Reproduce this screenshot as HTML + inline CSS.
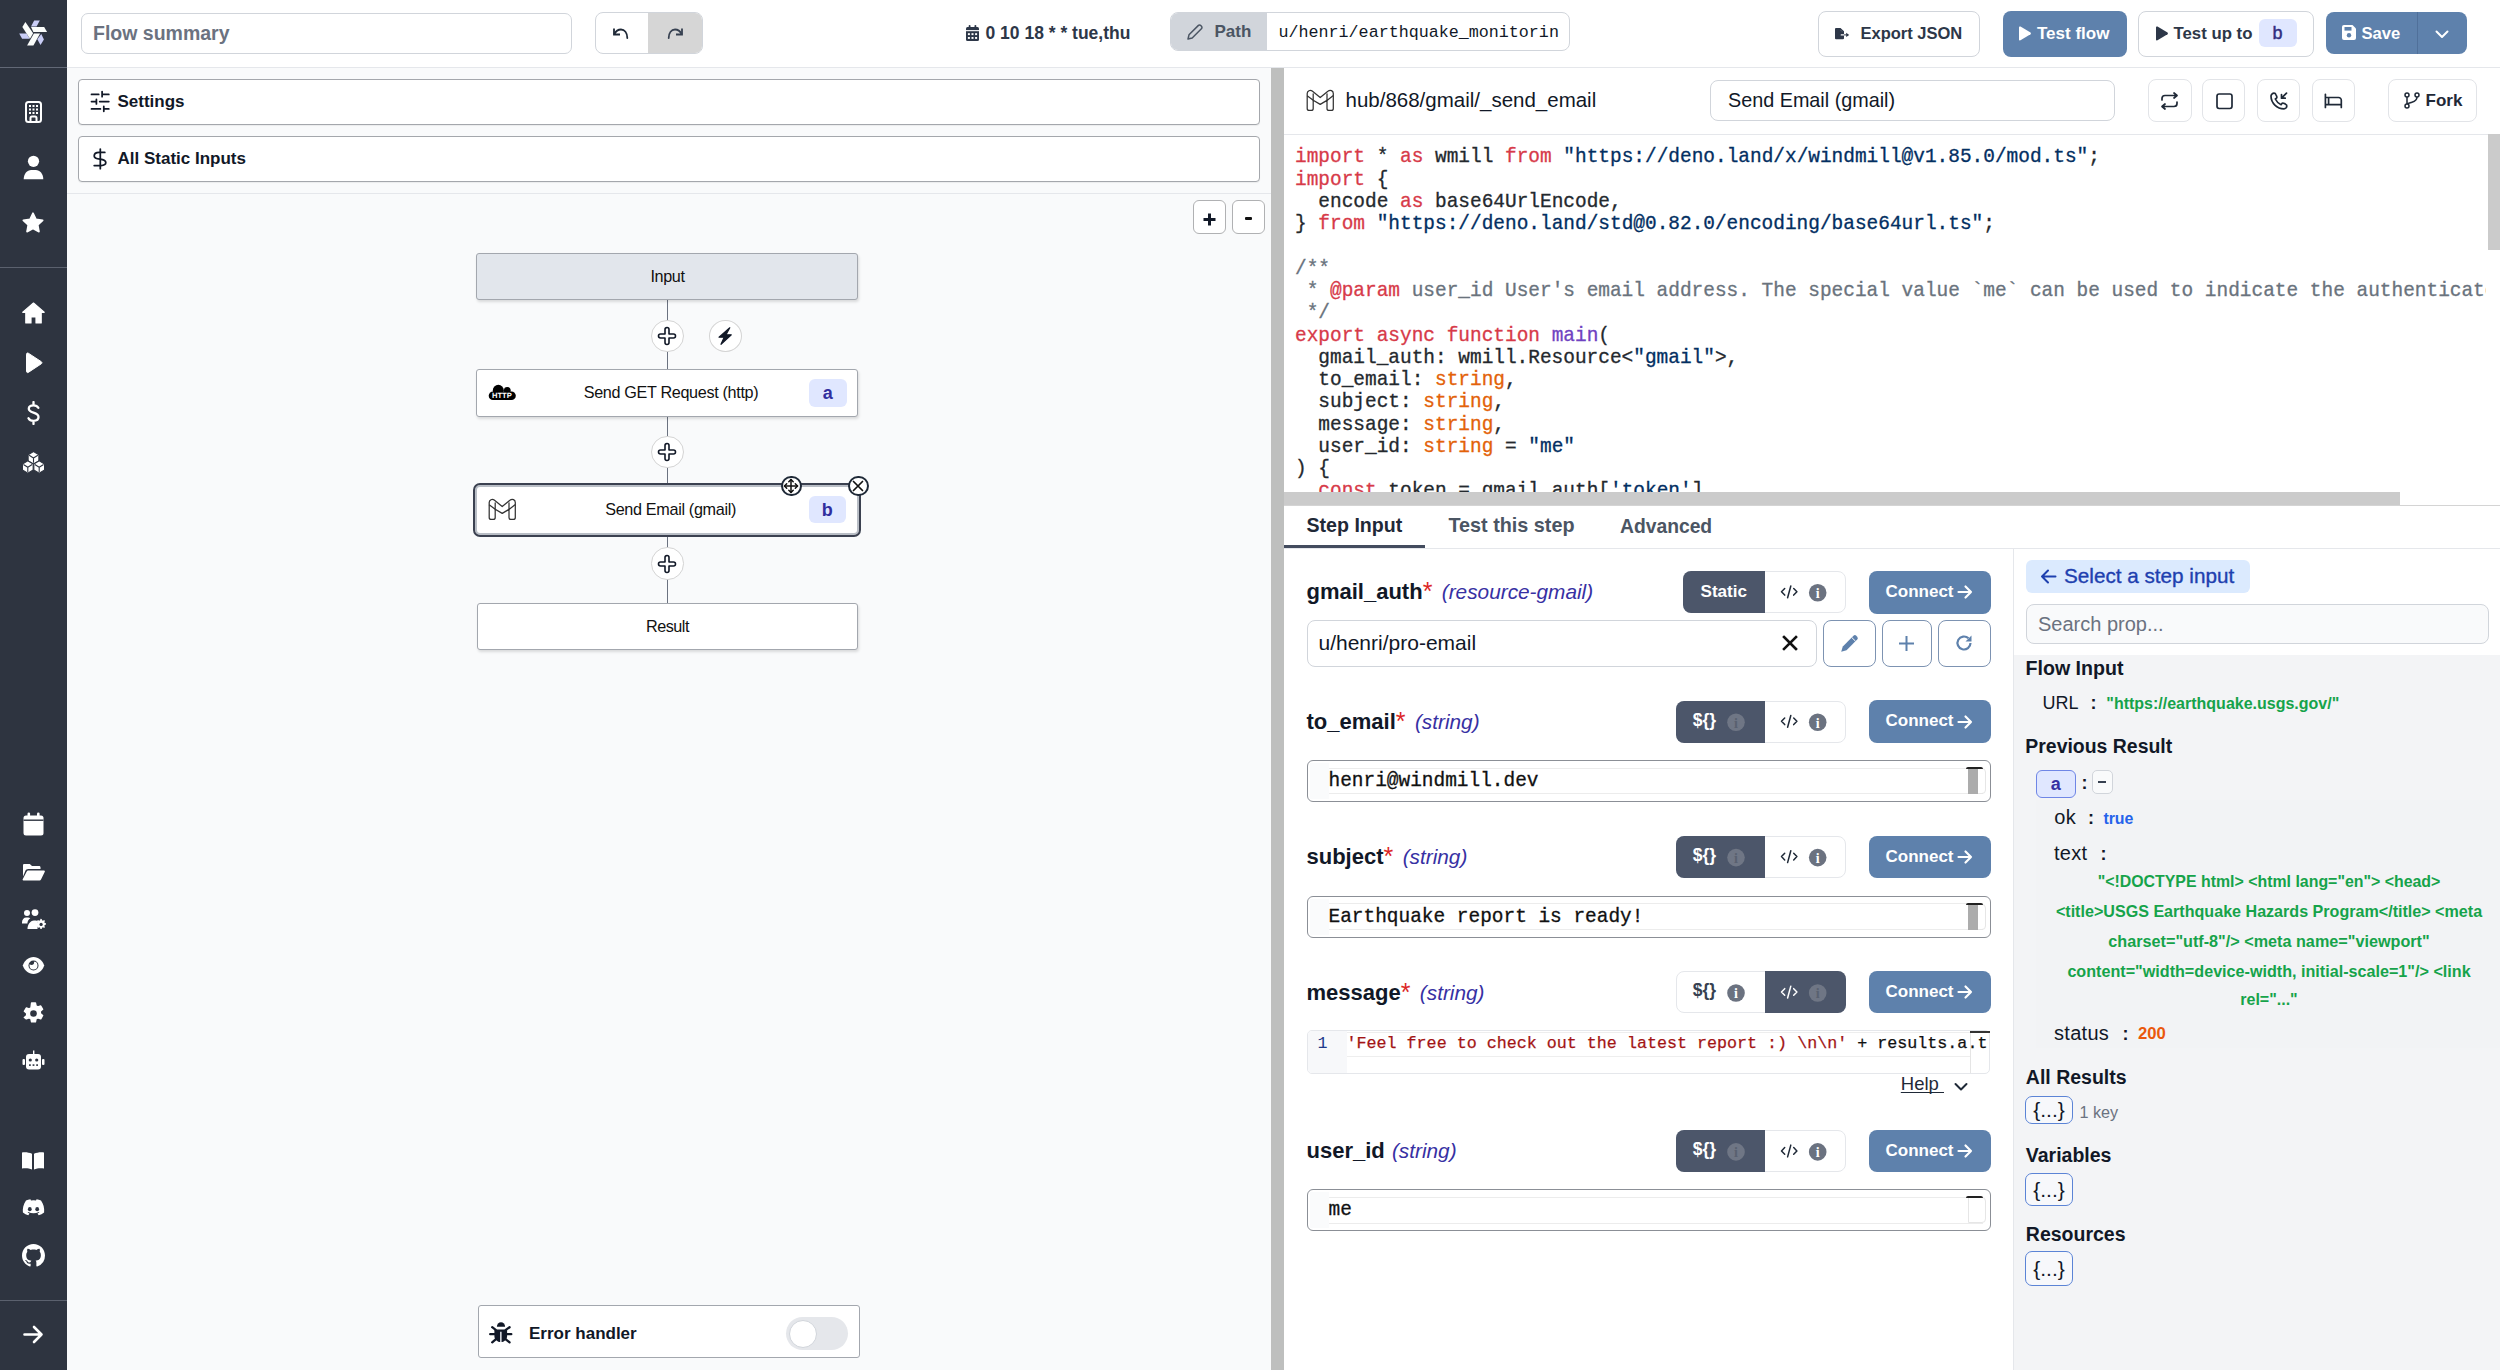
<!DOCTYPE html>
<html><head><meta charset="utf-8">
<style>
*{box-sizing:border-box;margin:0;padding:0}
html,body{width:2500px;height:1370px;overflow:hidden;background:#fff;font-family:"Liberation Sans",sans-serif;color:#111827;position:relative}
.a{position:absolute}
.ic{position:absolute;display:block}
#sb{left:0;top:0;width:67px;height:1370px;background:#2e3440}
.hr{position:absolute;left:0;width:67px;height:2px;background:#4a5060}
</style></head>
<body>

<div class="a" style="left:67px;top:0;width:2433px;height:67px;background:#fff"></div>
<div class="a" style="left:67px;top:67px;width:2433px;height:1px;background:#e5e7eb"></div>
<div class="a" style="left:67px;top:68px;width:1204px;height:1302px;background:#f9fafb"></div>
<div class="a" style="left:1271px;top:68px;width:13px;height:1302px;background:#bebfbe"></div>
<div class="a" style="left:1284px;top:68px;width:1216px;height:1302px;background:#fff"></div>
<div id="sb" class="a">
<svg class="ic" style="left:15px;top:15px" width="36" height="36" viewBox="0 0 1370 1370">
<polygon fill="#c9cdf6" points="160,700 440,700 560,905 270,905"/>
<polygon fill="#c9cdf6" points="730,210 945,210 820,435 610,435"/>
<polygon fill="#c9cdf6" points="1000,725 1100,930 970,1140 850,925"/>
<polygon fill="#fbfdfb" points="395,265 690,690 570,905 280,460"/>
<polygon fill="#fbfdfb" points="610,460 1110,460 1220,645 700,645"/>
<polygon fill="#fbfdfb" points="720,700 955,700 700,1160 460,1160"/>
</svg>
<div class="hr" style="top:66.8px;height:1.5px;background:#626876"></div>
<!-- building -->
<svg class="ic" style="left:25px;top:101px" width="17" height="22" viewBox="0 0 17 22"><rect x="1" y="1" width="15" height="20" rx="2.5" fill="none" stroke="#fff" stroke-width="2"/>
<g fill="#fff"><rect x="4" y="4" width="2" height="2"/><rect x="7.5" y="4" width="2" height="2"/><rect x="11" y="4" width="2" height="2"/><rect x="4" y="7.5" width="2" height="2"/><rect x="7.5" y="7.5" width="2" height="2"/><rect x="11" y="7.5" width="2" height="2"/><rect x="4" y="11" width="2" height="2"/><rect x="7.5" y="11" width="2" height="2"/><rect x="11" y="11" width="2" height="2"/></g>
<path d="M5.5 21v-4a1.5 1.5 0 0 1 1.5-1.5h3a1.5 1.5 0 0 1 1.5 1.5v4" fill="none" stroke="#fff" stroke-width="2"/></svg>
<!-- user -->
<svg class="ic" style="left:23px;top:155px" width="21" height="25" viewBox="0 0 21 25"><circle cx="10.5" cy="6.3" r="5.6" fill="#fff"/><path d="M0.7 24.3c0-5.5 3.5-9.3 7.5-9.3h4.6c4 0 7.5 3.8 7.5 9.3z" fill="#fff"/></svg>
<!-- star -->
<svg class="ic" style="left:22px;top:212px" width="22" height="22" viewBox="0 0 22 22"><path d="M11 1.2l3 6.2 6.7.9-4.9 4.7 1.2 6.7L11 16.5l-6 3.2 1.2-6.7L1.3 8.3 8 7.4z" fill="#fff" stroke="#fff" stroke-width="1.6" stroke-linejoin="round"/></svg>
<div class="hr" style="top:266.8px;height:1.5px;background:#5b616e"></div>
<!-- home -->
<svg class="ic" style="left:22px;top:302px" width="23" height="22" viewBox="0 0 23 22"><path d="M11.5 1L0.8 10.3h3v10.7h5.2v-6h5v6h5.2V10.3h3z" fill="#fff" stroke="#fff" stroke-width="1.2" stroke-linejoin="round"/></svg>
<!-- play -->
<svg class="ic" style="left:24px;top:352px" width="19" height="22" viewBox="0 0 19 22"><path d="M2.5 2.2c0-1 1-1.5 1.8-1l13 8.5c.8.5.8 1.6 0 2.1l-13 8.6c-.8.5-1.8 0-1.8-1z" fill="#fff" stroke="#fff" stroke-width="1" stroke-linejoin="round"/></svg>
<!-- dollar -->
<svg class="ic" style="left:26px;top:401px" width="15" height="24" viewBox="0 0 15 24"><path d="M7.500 1v3.200M7.500 19.800V23M12.300 6.800c-.8-1.500-2.500-2.500-4.800-2.500-2.900 0-4.700 1.500-4.700 3.500 0 4.900 9.700 2.900 9.700 8.300 0 2.200-2 3.700-5 3.700-2.500 0-4.200-1-5-2.600" fill="none" stroke="#fff" stroke-width="2.300" stroke-linecap="round"/></svg>
<!-- cubes -->
<svg class="ic" style="left:21px;top:451px" width="25" height="23" viewBox="0 0 25 23"><polygon points="12.5,0.5999999999999996 17.8692,3.6999999999999997 17.8692,9.9 12.5,13.0 7.1308,9.9 7.1308,3.6999999999999997" fill="#fff" stroke="#2e3440" stroke-width="1.100" stroke-linejoin="round"/><path d="M12.5 7.0V11.8M12.5 7.0L8.1308 4.3M12.5 7.0L16.8692 4.3" stroke="#2e3440" stroke-width="1.100"/><polygon points="6.8,9.8 12.1692,12.9 12.1692,19.1 6.8,22.2 1.4307999999999996,19.1 1.4307999999999996,12.9" fill="#fff" stroke="#2e3440" stroke-width="1.100" stroke-linejoin="round"/><path d="M6.8 16.2V21.0M6.8 16.2L2.4307999999999996 13.5M6.8 16.2L11.1692 13.5" stroke="#2e3440" stroke-width="1.100"/><polygon points="18.2,9.8 23.5692,12.9 23.5692,19.1 18.2,22.2 12.8308,19.1 12.8308,12.9" fill="#fff" stroke="#2e3440" stroke-width="1.100" stroke-linejoin="round"/><path d="M18.2 16.2V21.0M18.2 16.2L13.8308 13.5M18.2 16.2L22.5692 13.5" stroke="#2e3440" stroke-width="1.100"/></svg>

<!-- calendar -->
<svg class="ic" style="left:23px;top:812px" width="21" height="24" viewBox="0 0 21 24"><rect x="0.5" y="3.5" width="20" height="20" rx="2.5" fill="#fff"/><rect x="4.5" y="0.5" width="2.6" height="6" rx="1.3" fill="#fff"/><rect x="14" y="0.5" width="2.6" height="6" rx="1.3" fill="#fff"/><rect x="0.5" y="7.5" width="20" height="1.4" fill="#2e3440"/></svg>
<!-- folder open -->
<svg class="ic" style="left:22px;top:863px" width="23" height="18" viewBox="0 0 23 18"><path d="M1 2.2C1 1.5 1.6 1 2.3 1h5.5l2.2 2h7.2c.7 0 1.3.6 1.3 1.3V6H6.2c-1.3 0-2.3.7-2.8 1.8L1 13.5z" fill="#fff"/><path d="M6.5 7.5h15.5c.7 0 1.1.7.8 1.3l-3.8 7.8c-.3.5-.8.9-1.4.9H1.4c-.6 0-1-.6-.7-1.2l3.9-7.6c.3-.7 1.1-1.2 1.9-1.2z" fill="#fff"/></svg>
<!-- users cog -->
<svg class="ic" style="left:22px;top:909px" width="24" height="21" viewBox="0 0 24 21"><g fill="#fff"><circle cx="5" cy="4" r="3"/><circle cx="13" cy="3.6" r="3.4"/><path d="M0 13.5c0-3 1.8-5 4.2-5h2c.8 0 1.5.3 2.1.7-1.8 1.1-2.9 3-2.9 5.3H0z"/><path d="M5.5 20c0-4 2.6-8.5 6.5-8.5h1.5c1 0 1.8.2 2.5.6-.3 1.4-.2 3 .5 4.3L15 19l1 1z"/><path d="M18.5 9.8l1.2.1.3 1.3 1 .5 1.1-.7.9.9-.7 1.1.5 1 1.2.3v1.3l-1.2.3-.5 1 .7 1.1-.9.9-1.1-.7-1 .5-.3 1.2h-1.3l-.3-1.2-1-.5-1.1.7-.9-.9.7-1.1-.5-1-1.2-.3v-1.3l1.2-.3.5-1-.7-1.1.9-.9 1.1.7 1-.5z"/></g><circle cx="19.1" cy="15.4" r="1.6" fill="#2e3440"/></svg>
<!-- eye -->
<svg class="ic" style="left:22px;top:956px" width="23" height="19" viewBox="0 0 23 19"><path d="M11.5 1C6.3 1 2.4 4.6.8 9.5c1.6 4.9 5.5 8.5 10.7 8.5s9.1-3.6 10.7-8.5C20.6 4.6 16.7 1 11.5 1z" fill="#fff"/><circle cx="11.5" cy="9.5" r="5" fill="#2e3440"/><path d="M11.5 5.5a4 4 0 1 1-4 4c0-.4 0-.8.2-1.2.5.4 1.1.6 1.8.6a2.6 2.6 0 0 0 2.6-2.6c0-.3-.1-.6-.2-.8z" fill="#fff"/></svg>
<!-- cog -->
<svg class="ic" style="left:22px;top:1002px" width="23" height="23" viewBox="0 0 23 23"><path d="M9.6 1h3.8l.6 3 1.8 1 2.9-1 1.9 3.3-2.3 2v2.2l2.3 2-1.9 3.3-2.9-1-1.8 1-.6 3H9.6l-.6-3-1.8-1-2.9 1L2.4 15.5l2.3-2v-2.2l-2.3-2L4.3 6 7.2 7 9 6z" fill="#fff" stroke="#fff" stroke-width="1.5" stroke-linejoin="round"/><circle cx="11.5" cy="11.5" r="3.3" fill="#2e3440"/></svg>
<!-- robot -->
<svg class="ic" style="left:22px;top:1050px" width="23" height="21" viewBox="0 0 23 21"><rect x="11" y="0.5" width="1.4" height="4" fill="#fff"/><rect x="4" y="4" width="15" height="15.5" rx="3" fill="#fff"/><rect x="0.5" y="9" width="2.5" height="6" rx="1" fill="#fff"/><rect x="20" y="9" width="2.5" height="6" rx="1" fill="#fff"/><circle cx="8.3" cy="10" r="1.6" fill="#2e3440"/><circle cx="14.7" cy="10" r="1.6" fill="#2e3440"/><rect x="7" y="14.3" width="1.8" height="1.6" fill="#2e3440"/><rect x="10.6" y="14.3" width="1.8" height="1.6" fill="#2e3440"/><rect x="14.2" y="14.3" width="1.8" height="1.6" fill="#2e3440"/></svg>

<!-- book -->
<svg class="ic" style="left:21px;top:1151px" width="24" height="19" viewBox="0 0 24 19"><path d="M1 1.5c3.5-.5 7 0 10 1.3v15.7C8 17.2 4.5 17 1 17.5z" fill="#fff"/><path d="M23 1.5c-3.5-.5-7 0-10 1.3v15.7c3-1.3 6.5-1.5 10-1z" fill="#fff"/></svg>
<!-- discord -->
<svg class="ic" style="left:22px;top:1199px" width="23" height="18" viewBox="0 0 23 18"><path d="M19 1.6A18 18 0 0 0 14.6.3l-.6 1.2a16 16 0 0 0-5 0L8.4.3A18 18 0 0 0 4 1.6C1.3 5.7.5 9.6.9 13.5a18 18 0 0 0 5.4 2.8l1.2-1.9-1.9-.9.5-.4a12.800 12.800 0 0 0 10.8 0l.5.4-1.9.9 1.2 1.9a18 18 0 0 0 5.4-2.8c.5-4.5-.7-8.4-3.100-11.9z" fill="#fff"/><ellipse cx="7.8" cy="10.2" rx="1.9" ry="2.1" fill="#2e3440"/><ellipse cx="15.2" cy="10.2" rx="1.9" ry="2.1" fill="#2e3440"/></svg>
<!-- github -->
<svg class="ic" style="left:22px;top:1243px" width="23" height="25" viewBox="0 0 16 16"><path fill="#fff" d="M8 0C3.58 0 0 3.58 0 8c0 3.54 2.29 6.53 5.47 7.59.4.07.55-.17.55-.38 0-.19-.01-.82-.01-1.49-2.01.37-2.53-.49-2.69-.94-.09-.23-.48-.94-.82-1.13-.28-.15-.68-.52-.01-.53.63-.01 1.08.58 1.23.82.72 1.21 1.87.87 2.33.66.07-.52.28-.87.51-1.07-1.780-.2-3.640-.89-3.640-3.95 0-.87.31-1.59.82-2.15-.08-.2-.36-1.02.08-2.12 0 0 .67-.21 2.2.82.64-.18 1.32-.27 2-.27.68 0 1.36.09 2 .27 1.53-1.04 2.2-.82 2.2-.82.44 1.1.16 1.92.08 2.12.51.56.82 1.27.82 2.15 0 3.07-1.87 3.75-3.650 3.95.29.25.54.73.54 1.48 0 1.07-.01 1.93-.01 2.2 0 .21.15.46.55.38A8.013 8.013 0 0016 8c0-4.42-3.58-8-8-8z"/></svg>
<div class="hr" style="top:1299.5px;height:1.5px;background:#5b616e"></div>
<!-- arrow -->
<svg class="ic" style="left:23px;top:1325px" width="21" height="19" viewBox="0 0 21 19"><path d="M1.5 9.5h17M11 2l7.5 7.5L11 17" fill="none" stroke="#fff" stroke-width="2.6" stroke-linecap="round" stroke-linejoin="round"/></svg>
</div>

<div style="position:absolute;left:81px;top:13px;width:491px;height:41px;border:1px solid #d1d5db;border-radius:7px;background:#fff"></div>
<div style="position:absolute;left:93px;top:23.72px;font-family:'Liberation Sans',sans-serif;font-size:19.5px;line-height:1;font-weight:700;font-style:normal;color:#6b7280;white-space:pre;">Flow summary</div>
<div style="position:absolute;left:595px;top:12px;width:108px;height:42px;border:1px solid #d1d5db;border-radius:8px;background:#fff;overflow:hidden"></div>
<div style="position:absolute;left:648px;top:13px;width:54px;height:40px;background:#d6d6d6;border-radius:0 7px 7px 0"></div>
<svg style="position:absolute;left:612px;top:27px;overflow:visible;" width="18" height="14" viewBox="0 0 18 14"><path d="M2 1.5v6h6" fill="none" stroke="#1f2937" stroke-width="1.8" stroke-linejoin="miter"/><path d="M2.5 7C4 3.8 6.5 2.5 9 2.5c3.5 0 6.2 3 6.3 8.5" fill="none" stroke="#1f2937" stroke-width="1.8" stroke-linecap="round"/></svg>
<svg style="position:absolute;left:666px;top:27px;overflow:visible;" width="18" height="14" viewBox="0 0 18 14"><path d="M16 1.5v6h-6" fill="none" stroke="#374151" stroke-width="1.8"/><path d="M15.5 7C14 3.8 11.5 2.5 9 2.5c-3.5 0-6.2 3-6.3 8.5" fill="none" stroke="#374151" stroke-width="1.8" stroke-linecap="round"/></svg>
<svg style="position:absolute;left:966px;top:25px;overflow:visible;" width="13" height="16" viewBox="0 0 13 16"><rect x="0" y="2" width="13" height="14" rx="1.500" fill="#2d3748"/><rect x="2.700" y="0" width="1.800" height="4" rx=".8" fill="#2d3748"/><rect x="8.500" y="0" width="1.800" height="4" rx=".8" fill="#2d3748"/><rect x="0" y="5.100" width="13" height="1.100" fill="#fff"/><g fill="#fff"><rect x="1.900" y="8.200" width="2" height="1.900"/><rect x="5.500" y="8.200" width="2" height="1.900"/><rect x="9.100" y="8.200" width="2" height="1.900"/><rect x="1.900" y="12" width="2" height="1.900"/><rect x="5.500" y="12" width="2" height="1.900"/><rect x="9.100" y="12" width="2" height="1.900"/></g></svg>
<div style="position:absolute;left:985.5px;top:25.12px;font-family:'Liberation Sans',sans-serif;font-size:17.5px;line-height:1;font-weight:700;font-style:normal;color:#2d3748;white-space:pre;">0 10 18 * * tue,thu</div>
<div style="position:absolute;left:1170px;top:12px;width:400px;height:39px;border:1px solid #d1d5db;border-radius:8px;background:#fff;overflow:hidden"></div>
<div style="position:absolute;left:1171px;top:13px;width:96px;height:37px;background:#d1d5db;border-radius:7px 0 0 7px"></div>
<svg style="position:absolute;left:1186px;top:24px;overflow:visible;" width="17" height="17" viewBox="0 0 17 17"><path d="M2 15l1-4.2L12.2 1.6a1.8 1.8 0 0 1 2.6 0l.6.6a1.8 1.8 0 0 1 0 2.6L6.200 14z" fill="none" stroke="#4b5563" stroke-width="1.5" stroke-linejoin="round"/></svg>
<div style="position:absolute;left:1214.5px;top:22.85px;font-family:'Liberation Sans',sans-serif;font-size:17px;line-height:1;font-weight:700;font-style:normal;color:#4b5563;white-space:pre;">Path</div>
<div style="position:absolute;left:1278.5px;top:24.91px;font-family:'Liberation Mono',monospace;font-size:16.7px;line-height:1;font-weight:400;font-style:normal;color:#111827;white-space:pre;">u/henri/earthquake_monitorin</div>
<div style="position:absolute;left:1818px;top:11px;width:162px;height:46px;border:1px solid #d1d5db;border-radius:8px;background:#fff"></div>
<svg style="position:absolute;left:1835px;top:27.8px;overflow:visible;" width="15" height="12" viewBox="0 0 15 12"><path d="M0 1a1 1 0 0 1 1-1H5.500L9 3.300V6.200H6.300a.7.7 0 0 0 0 1.400H9V10.200a1 1 0 0 1-1 1H1a1 1 0 0 1-1-1z" fill="#2d3748"/><path d="M5.700 2.200L7 3.500" stroke="#fff" stroke-width=".5" opacity=".6"/><path d="M9 6.900H11.700" stroke="#2d3748" stroke-width="1"/><path d="M11.200 4.700L14.200 6.900 11.200 9.100z" fill="#2d3748"/></svg>
<div style="position:absolute;left:1860.5px;top:25.27px;font-family:'Liberation Sans',sans-serif;font-size:16.5px;line-height:1;font-weight:700;font-style:normal;color:#2d3748;white-space:pre;">Export JSON</div>
<div style="position:absolute;left:2003px;top:11px;width:124px;height:46px;background:#5e81ac;border-radius:8px"></div>
<svg style="position:absolute;left:2018px;top:26px;overflow:visible;" width="13" height="15" viewBox="0 0 13 15"><path d="M1 1.5c0-.8.8-1.300 1.500-.9l10 6c.6.4.6 1.300 0 1.700l-10 6c-.7.4-1.500-.1-1.500-.9z" fill="#fff"/></svg>
<div style="position:absolute;left:2037px;top:24.85px;font-family:'Liberation Sans',sans-serif;font-size:17px;line-height:1;font-weight:700;font-style:normal;color:#ffffff;white-space:pre;">Test flow</div>
<div style="position:absolute;left:2138px;top:11px;width:176px;height:46px;border:1px solid #d1d5db;border-radius:8px;background:#fff"></div>
<svg style="position:absolute;left:2155px;top:26px;overflow:visible;" width="13" height="15" viewBox="0 0 13 15"><path d="M1 1.5c0-.8.8-1.300 1.500-.9l10 6c.6.4.6 1.300 0 1.700l-10 6c-.7.4-1.500-.1-1.500-.9z" fill="#2d3748"/></svg>
<div style="position:absolute;left:2173.5px;top:25.72px;font-family:'Liberation Sans',sans-serif;font-size:16.8px;line-height:1;font-weight:700;font-style:normal;color:#2d3748;white-space:pre;">Test up to</div>
<div style="position:absolute;left:2259px;top:19px;width:38px;height:28px;background:#e0e7ff;border-radius:6px"></div>
<div style="position:absolute;left:1777.5px;width:1000px;text-align:center;top:24.00px;font-family:'Liberation Sans',sans-serif;font-size:18px;line-height:1;font-weight:400;font-style:normal;color:#312e81;white-space:pre;-webkit-text-stroke:0.45px #312e81">b</div>
<div style="position:absolute;left:2326px;top:12px;width:141px;height:42px;background:#5e81ac;border-radius:8px"></div>
<div style="position:absolute;left:2417px;top:12px;width:1px;height:42px;background:#50709a"></div>
<svg style="position:absolute;left:2342px;top:25px;overflow:visible;" width="14" height="15" viewBox="0 0 14 15"><path d="M0 2A2 2 0 0 1 2 0h8.500L14 3.500V13a2 2 0 0 1-2 2H2a2 2 0 0 1-2-2z" fill="#fff"/><rect x="2.500" y="2" width="7" height="3.600" fill="#5e81ac"/><circle cx="7" cy="10.300" r="2.200" fill="#5e81ac"/></svg>
<div style="position:absolute;left:2361.5px;top:25.89px;font-family:'Liberation Sans',sans-serif;font-size:16.6px;line-height:1;font-weight:700;font-style:normal;color:#ffffff;white-space:pre;">Save</div>
<svg style="position:absolute;left:2435px;top:29.5px;overflow:visible;" width="14" height="9" viewBox="0 0 14 9"><path d="M1.500 1.500L7 7l5.500-5.500" fill="none" stroke="#fff" stroke-width="2" stroke-linecap="round" stroke-linejoin="round"/></svg>
<div style="position:absolute;left:67px;top:193px;width:1204px;height:1px;background:#e5e7eb"></div>
<div style="position:absolute;left:78px;top:79px;width:1182px;height:46px;background:#fff;border:1px solid #a4a7ac;border-radius:4px;box-shadow:0 1px 1px rgba(0,0,0,.06)"></div>
<svg style="position:absolute;left:86px;top:88px;overflow:visible;" width="28" height="26" viewBox="0 0 28 26"><g stroke="#111827" stroke-width="1.750" stroke-linecap="round" fill="none"><path d="M5.500 6.450H12.700M16.100 3.600V8.700M16.100 6.450H22.800"/><path d="M5.500 13.600H10.400M10.400 11.400V15.900M13.700 13.600H22.800"/><path d="M5.500 20.900H14.400M17.800 18.400V23.300M17.800 20.900H22.800"/></g></svg>
<div style="position:absolute;left:117.5px;top:92.85px;font-family:'Liberation Sans',sans-serif;font-size:17px;line-height:1;font-weight:700;font-style:normal;color:#111827;white-space:pre;">Settings</div>
<div style="position:absolute;left:78px;top:136px;width:1182px;height:46px;background:#fff;border:1px solid #a4a7ac;border-radius:4px;box-shadow:0 1px 1px rgba(0,0,0,.06)"></div>
<svg style="position:absolute;left:88px;top:144px;overflow:visible;" width="24" height="28" viewBox="0 0 24 28"><g stroke="#111827" stroke-width="1.750" stroke-linecap="round" fill="none"><path d="M12.300 5.100V24.700"/><path d="M16.800 8.400H11.200C8 8.400 6.200 9.900 6.200 11.900 6.200 14.100 8.500 14.700 12 15.100 16 15.600 17.800 16.600 17.800 18.600 17.800 20.600 16 21.500 13 21.500H6.200"/></g></svg>
<div style="position:absolute;left:117.5px;top:150.05px;font-family:'Liberation Sans',sans-serif;font-size:17px;line-height:1;font-weight:700;font-style:normal;color:#111827;white-space:pre;">All Static Inputs</div>
<div style="position:absolute;left:1193px;top:200px;width:33px;height:34px;background:#fff;border:1.3px solid #b0b1b3;border-radius:6px"></div>
<svg style="position:absolute;left:1202px;top:211.5px;overflow:visible;" width="15" height="15" viewBox="0 0 15 15"><path d="M7.5 1.500v12M1.500 7.500h12" stroke="#111827" stroke-width="3"/></svg>
<div style="position:absolute;left:1232px;top:200px;width:33px;height:34px;background:#fff;border:1.3px solid #b0b1b3;border-radius:6px"></div>
<div style="position:absolute;left:1245px;top:217px;width:7px;height:3px;background:#111111;border-radius:1px"></div>
<div style="position:absolute;left:666.7px;top:299px;width:1.3999999999999773px;height:21px;background:#6b7280"></div>
<div style="position:absolute;left:666.7px;top:352px;width:1.3999999999999773px;height:17px;background:#6b7280"></div>
<div style="position:absolute;left:666.7px;top:416px;width:1.3999999999999773px;height:20px;background:#6b7280"></div>
<div style="position:absolute;left:666.7px;top:468px;width:1.3999999999999773px;height:16px;background:#6b7280"></div>
<div style="position:absolute;left:666.7px;top:535px;width:1.3999999999999773px;height:13px;background:#6b7280"></div>
<div style="position:absolute;left:666.7px;top:579px;width:1.3999999999999773px;height:24px;background:#6b7280"></div>
<div style="position:absolute;left:651.1999999999999px;top:319.8px;width:32.40000000000009px;height:32.39999999999998px;background:#fff;border:1px solid #d4d4d4;border-radius:50%"></div>
<svg style="position:absolute;left:659.4px;top:328px;overflow:visible;" width="16" height="16" viewBox="0 0 16 16"><path d="M6 1.500a2 2 0 0 1 4 0V6h4.500a2 2 0 0 1 0 4H10v4.500a2 2 0 0 1-4 0V10H1.500a2 2 0 0 1 0-4H6z" fill="none" stroke="#111827" stroke-width="1.600" stroke-linejoin="round"/></svg>
<div style="position:absolute;left:651.1999999999999px;top:436.0px;width:32.40000000000009px;height:32.39999999999998px;background:#fff;border:1px solid #d4d4d4;border-radius:50%"></div>
<svg style="position:absolute;left:659.4px;top:444.2px;overflow:visible;" width="16" height="16" viewBox="0 0 16 16"><path d="M6 1.500a2 2 0 0 1 4 0V6h4.500a2 2 0 0 1 0 4H10v4.500a2 2 0 0 1-4 0V10H1.500a2 2 0 0 1 0-4H6z" fill="none" stroke="#111827" stroke-width="1.600" stroke-linejoin="round"/></svg>
<div style="position:absolute;left:651.1999999999999px;top:547.3px;width:32.40000000000009px;height:32.40000000000009px;background:#fff;border:1px solid #d4d4d4;border-radius:50%"></div>
<svg style="position:absolute;left:659.4px;top:555.5px;overflow:visible;" width="16" height="16" viewBox="0 0 16 16"><path d="M6 1.500a2 2 0 0 1 4 0V6h4.500a2 2 0 0 1 0 4H10v4.500a2 2 0 0 1-4 0V10H1.500a2 2 0 0 1 0-4H6z" fill="none" stroke="#111827" stroke-width="1.600" stroke-linejoin="round"/></svg>
<div style="position:absolute;left:708.8px;top:320.2px;width:32.80000000000007px;height:32.19999999999999px;background:#fff;border:1px solid #d4d4d4;border-radius:50%"></div>
<svg style="position:absolute;left:718px;top:327px;overflow:visible;" width="14" height="18" viewBox="0 0 14 18"><path d="M11.800 0.800L1 10.200h5.200L3 17.300l10.300-9.500H8z" fill="#111827" stroke="#111827" stroke-width="1.200" stroke-linejoin="round"/></svg>
<div style="position:absolute;left:476px;top:253px;width:382px;height:47px;background:#e2e6ec;border:1px solid #a3a7ae;border-radius:3px;box-shadow:1px 2px 3px rgba(0,0,0,.13);"></div>
<div style="position:absolute;left:167.5px;width:1000px;text-align:center;top:267.53px;font-family:'Liberation Sans',sans-serif;font-size:16.2px;line-height:1;font-weight:400;font-style:normal;color:#111111;white-space:pre;letter-spacing:-0.4px">Input</div>
<div style="position:absolute;left:476px;top:369px;width:382px;height:48px;background:#fff;border:1px solid #a3a7ae;border-radius:3px;box-shadow:1px 2px 3px rgba(0,0,0,.13);"></div>
<svg style="position:absolute;left:488px;top:384px;overflow:visible;" width="29" height="17" viewBox="0 0 29 17"><g fill="#000"><circle cx="10.300" cy="6.300" r="5.500"/><circle cx="19.300" cy="6.500" r="3.400"/><rect x="0.700" y="7.400" width="27.100" height="8.600" rx="4.300"/></g><text x="13.900" y="14.100" text-anchor="middle" font-family="Liberation Sans" font-weight="700" font-size="7.600" fill="#fff" text-rendering="geometricPrecision">HTTP</text></svg>
<div style="position:absolute;left:171px;width:1000px;text-align:center;top:384.13px;font-family:'Liberation Sans',sans-serif;font-size:16.2px;line-height:1;font-weight:400;font-style:normal;color:#111111;white-space:pre;letter-spacing:-0.34px">Send GET Request (http)</div>
<div style="position:absolute;left:809px;top:379px;width:37.5px;height:27.5px;background:#e0e7ff;border-radius:6px"></div>
<div style="position:absolute;left:327.70000000000005px;width:1000px;text-align:center;top:384.00px;font-family:'Liberation Sans',sans-serif;font-size:18px;line-height:1;font-weight:700;font-style:normal;color:#312e9e;white-space:pre;">a</div>
<div style="position:absolute;left:472.6px;top:482.9px;width:388.6px;height:53.700000000000045px;background:#fff;border:2.6px solid #3b4150;border-radius:7px;box-shadow:inset 0 0 0 2px #b9bec6"></div>
<svg style="position:absolute;left:484px;top:494px;overflow:visible;" width="38" height="30" viewBox="0 0 38 30"><g fill="none" stroke="#333" stroke-width="1.250" stroke-linejoin="round" stroke-linecap="round"><path d="M5.200 23.400V8.500A3.100 3.100 0 0 1 10.200 6.100L18.200 12.500 26.200 6.100A3.100 3.100 0 0 1 31.300 8.500V23.400a2 2 0 0 1-2 2H27a2 2 0 0 1-2-2V15.400L18.200 19.400 11.200 15.300V23.400a2 2 0 0 1-2 2H7.200a2 2 0 0 1-2-2z"/><path d="M11.200 8.800V15.300M5.500 11.100L11.200 15.300M25 8.800V15.400M31 10.800L25 15.400"/></g></svg>
<div style="position:absolute;left:170.60000000000002px;width:1000px;text-align:center;top:500.83px;font-family:'Liberation Sans',sans-serif;font-size:16.2px;line-height:1;font-weight:400;font-style:normal;color:#111111;white-space:pre;letter-spacing:-0.33px">Send Email (gmail)</div>
<div style="position:absolute;left:808.5px;top:496px;width:37.700000000000045px;height:27.299999999999955px;background:#e0e7ff;border-radius:6px"></div>
<div style="position:absolute;left:327.29999999999995px;width:1000px;text-align:center;top:500.70px;font-family:'Liberation Sans',sans-serif;font-size:18px;line-height:1;font-weight:700;font-style:normal;color:#312e9e;white-space:pre;">b</div>
<div style="position:absolute;left:781px;top:475.5px;width:20.5px;height:20.5px;background:#fff;border:2px solid #1f2937;border-radius:50%"></div>
<svg style="position:absolute;left:783px;top:477.7px;overflow:visible;" width="16" height="16" viewBox="0 0 16 16"><g stroke="#111" stroke-width="1.500" fill="none" stroke-linecap="round" stroke-linejoin="round"><path d="M8 1.500v13M1.500 8h13"/><path d="M5.800 3.700L8 1.500l2.200 2.200M5.800 12.300L8 14.500l2.200-2.200M3.700 5.800L1.500 8l2.200 2.200M12.300 5.800L14.500 8l-2.200 2.200"/></g></svg>
<div style="position:absolute;left:848px;top:475.5px;width:20.799999999999955px;height:20.69999999999999px;background:#fff;border:2px solid #1f2937;border-radius:50%"></div>
<svg style="position:absolute;left:852.4px;top:479.9px;overflow:visible;" width="12" height="12" viewBox="0 0 12 12"><path d="M1.500 1.500l9 9M10.500 1.500l-9 9" stroke="#111" stroke-width="1.700" stroke-linecap="round"/></svg>
<div style="position:absolute;left:476.5px;top:602.5px;width:381.0px;height:47.0px;background:#fff;border:1px solid #a3a7ae;border-radius:3px;box-shadow:1px 2px 3px rgba(0,0,0,.13);"></div>
<div style="position:absolute;left:167.5px;width:1000px;text-align:center;top:617.63px;font-family:'Liberation Sans',sans-serif;font-size:16.2px;line-height:1;font-weight:400;font-style:normal;color:#111111;white-space:pre;letter-spacing:-0.5px">Result</div>
<div style="position:absolute;left:477.5px;top:1304.5px;width:382.0px;height:53.0px;background:#fff;border:1px solid #a3a7ae;border-radius:3px"></div>
<svg style="position:absolute;left:484px;top:1316px;overflow:visible;" width="36" height="34" viewBox="0 0 36 34"><g fill="#111827"><path d="M12.900 10.700a4.100 4.500 0 0 1 8.200 0z"/><path d="M10.400 13.400h12.700v6.500c0 3.500-2.800 6.100-6.300 6.100s-6.400-2.600-6.400-6.100z"/></g><g stroke="#111827" stroke-width="2.300" stroke-linecap="round"><path d="M8.200 11.200L11.700 13.900M25.600 11.200L21.800 13.900M6.200 18.200H10.500M27.300 18.200H23M8.200 26.300L11.700 23.300M25.600 26.300L21.800 23.300"/></g><path d="M16.850 15.800V26.300" stroke="#e6e8ee" stroke-width="1.500"/></svg>
<div style="position:absolute;left:529px;top:1325.05px;font-family:'Liberation Sans',sans-serif;font-size:17px;line-height:1;font-weight:700;font-style:normal;color:#111827;white-space:pre;">Error handler</div>
<div style="position:absolute;left:786px;top:1317px;width:61.5px;height:33px;background:#e5e7eb;border-radius:17px"></div>
<div style="position:absolute;left:788.5px;top:1319.5px;width:28.0px;height:28.0px;background:#fff;border:1px solid #d1d5db;border-radius:50%"></div>
<div style="position:absolute;left:1284px;top:134px;width:1216px;height:1px;background:#e5e7eb"></div>
<svg style="position:absolute;left:1301.8px;top:85.2px;overflow:visible;" width="38" height="30" viewBox="0 0 38 30"><g fill="none" stroke="#333" stroke-width="1.250" stroke-linejoin="round" stroke-linecap="round"><path d="M5.200 23.400V8.500A3.100 3.100 0 0 1 10.200 6.100L18.200 12.500 26.200 6.100A3.100 3.100 0 0 1 31.300 8.500V23.400a2 2 0 0 1-2 2H27a2 2 0 0 1-2-2V15.400L18.200 19.400 11.200 15.300V23.400a2 2 0 0 1-2 2H7.200a2 2 0 0 1-2-2z"/><path d="M11.200 8.800V15.300M5.500 11.100L11.200 15.300M25 8.800V15.400M31 10.800L25 15.400"/></g></svg>
<div style="position:absolute;left:1345.5px;top:90.38px;font-family:'Liberation Sans',sans-serif;font-size:20.5px;line-height:1;font-weight:400;font-style:normal;color:#111827;white-space:pre;">hub/868/gmail/_send_email</div>
<div style="position:absolute;left:1710px;top:80px;width:405px;height:41px;border:1px solid #d1d5db;border-radius:8px;background:#fff"></div>
<div style="position:absolute;left:1728px;top:90.97px;font-family:'Liberation Sans',sans-serif;font-size:19.8px;line-height:1;font-weight:400;font-style:normal;color:#111827;white-space:pre;">Send Email (gmail)</div>
<div style="position:absolute;left:2148px;top:79px;width:44px;height:43px;border:1px solid #e2e4e8;border-radius:8px;background:#fff"></div>
<div style="position:absolute;left:2202px;top:79px;width:43px;height:43px;border:1px solid #e2e4e8;border-radius:8px;background:#fff"></div>
<div style="position:absolute;left:2257px;top:79px;width:43px;height:43px;border:1px solid #e2e4e8;border-radius:8px;background:#fff"></div>
<div style="position:absolute;left:2312px;top:79px;width:43px;height:43px;border:1px solid #e2e4e8;border-radius:8px;background:#fff"></div>
<svg style="position:absolute;left:2161px;top:92px;overflow:visible;" width="17" height="18" viewBox="0 0 17 18"><g fill="none" stroke="#1f2937" stroke-width="1.700" stroke-linecap="round" stroke-linejoin="round"><path d="M1 8V6.500A3 3 0 0 1 4 3.500h12M13 1l3 2.500-3 2.500"/><path d="M16 10v1.500a3 3 0 0 1-3 3H1M4 17l-3-2.500 3-2.500"/></g></svg>
<svg style="position:absolute;left:2216px;top:93px;overflow:visible;" width="17" height="16" viewBox="0 0 17 16"><rect x="1" y="1" width="15" height="14.500" rx="2.200" fill="none" stroke="#1f2937" stroke-width="1.700" stroke-linecap="round" stroke-linejoin="round"/></svg>
<svg style="position:absolute;left:2270px;top:92px;overflow:visible;" width="18" height="18" viewBox="0 0 18 18"><g fill="none" stroke="#1f2937" stroke-width="1.700" stroke-linecap="round" stroke-linejoin="round"><path d="M4 1.200c-1.500 0-3 1.300-3 2.800 0 7 6 12.800 13 12.800 1.500 0 2.800-1.400 2.800-2.900 0-1-.8-1.600-1.600-2l-1.600-.7c-.8-.3-1.600 0-2 .7l-.5.8C8.800 11.700 6.400 9.300 5.300 7l.8-.5c.7-.4 1-1.200.7-2L6 2.800C5.700 2 5 1.200 4 1.200z"/><path d="M16.500 1.200L11.500 6.200M11.500 2.500v3.700h3.700"/></g></svg>
<svg style="position:absolute;left:2324px;top:93px;overflow:visible;" width="19" height="16" viewBox="0 0 19 16"><g fill="none" stroke="#1f2937" stroke-width="1.700" stroke-linecap="round" stroke-linejoin="round"><path d="M1.400 1.300V14.400M1.400 4.500H14.500a2.700 2.700 0 0 1 2.800 2.700V14.400M1.400 11.700H17.300M4.600 4.500V11.700"/></g></svg>
<div style="position:absolute;left:2388px;top:79px;width:89px;height:43px;border:1px solid #e2e4e8;border-radius:8px;background:#fff"></div>
<svg style="position:absolute;left:2404px;top:92px;overflow:visible;" width="16" height="17" viewBox="0 0 16 17"><g fill="none" stroke="#1f2937" stroke-width="1.500"><circle cx="3" cy="3" r="2"/><circle cx="3" cy="14" r="2"/><circle cx="13" cy="3" r="2"/><path d="M3 5v7M13 5c0 4-3 4.500-6 5.500-2 .7-3.500 1-3.500 1.500"/></g></svg>
<div style="position:absolute;left:2425.5px;top:91.75px;font-family:'Liberation Sans',sans-serif;font-size:17px;line-height:1;font-weight:700;font-style:normal;color:#1f2937;white-space:pre;">Fork</div>
<div style="position:absolute;left:1284px;top:135px;width:1202px;height:357px;overflow:hidden;font-family:'Liberation Mono',monospace;font-size:19.45px;line-height:1;-webkit-text-stroke:0.3px currentColor"><div style="position:absolute;left:11px;top:13.42px;white-space:pre"><span style="color:#d73a49">import</span><span style="color:#24292e"> * </span><span style="color:#d73a49">as</span><span style="color:#24292e"> wmill </span><span style="color:#d73a49">from</span><span style="color:#24292e"> </span><span style="color:#032f62">&quot;https://deno.land/x/windmill@v1.85.0/mod.ts&quot;</span><span style="color:#24292e">;</span></div><div style="position:absolute;left:11px;top:35.69px;white-space:pre"><span style="color:#d73a49">import</span><span style="color:#24292e"> {</span></div><div style="position:absolute;left:11px;top:57.96px;white-space:pre"><span style="color:#24292e">  encode </span><span style="color:#d73a49">as</span><span style="color:#24292e"> base64UrlEncode,</span></div><div style="position:absolute;left:11px;top:80.23px;white-space:pre"><span style="color:#24292e">} </span><span style="color:#d73a49">from</span><span style="color:#24292e"> </span><span style="color:#032f62">&quot;https://deno.land/std@0.82.0/encoding/base64url.ts&quot;</span><span style="color:#24292e">;</span></div><div style="position:absolute;left:11px;top:102.50px;white-space:pre"></div><div style="position:absolute;left:11px;top:124.77px;white-space:pre"><span style="color:#6a737d">/**</span></div><div style="position:absolute;left:11px;top:147.04px;white-space:pre"><span style="color:#6a737d"> * </span><span style="color:#d73a49">@param</span><span style="color:#6a737d"> user_id User&#x27;s email address. The special value `me` can be used to indicate the authenticated user.</span></div><div style="position:absolute;left:11px;top:169.31px;white-space:pre"><span style="color:#6a737d"> */</span></div><div style="position:absolute;left:11px;top:191.58px;white-space:pre"><span style="color:#d73a49">export</span><span style="color:#24292e"> </span><span style="color:#d73a49">async</span><span style="color:#24292e"> </span><span style="color:#d73a49">function</span><span style="color:#24292e"> </span><span style="color:#6f42c1">main</span><span style="color:#24292e">(</span></div><div style="position:absolute;left:11px;top:213.85px;white-space:pre"><span style="color:#24292e">  gmail_auth: wmill.Resource&lt;</span><span style="color:#032f62">&quot;gmail&quot;</span><span style="color:#24292e">&gt;,</span></div><div style="position:absolute;left:11px;top:236.12px;white-space:pre"><span style="color:#24292e">  to_email: </span><span style="color:#e36209">string</span><span style="color:#24292e">,</span></div><div style="position:absolute;left:11px;top:258.39px;white-space:pre"><span style="color:#24292e">  subject: </span><span style="color:#e36209">string</span><span style="color:#24292e">,</span></div><div style="position:absolute;left:11px;top:280.66px;white-space:pre"><span style="color:#24292e">  message: </span><span style="color:#e36209">string</span><span style="color:#24292e">,</span></div><div style="position:absolute;left:11px;top:302.93px;white-space:pre"><span style="color:#24292e">  user_id: </span><span style="color:#e36209">string</span><span style="color:#24292e"> = </span><span style="color:#032f62">&quot;me&quot;</span></div><div style="position:absolute;left:11px;top:325.20px;white-space:pre"><span style="color:#24292e">) {</span></div><div style="position:absolute;left:11px;top:347.47px;white-space:pre"><span style="color:#24292e">  </span><span style="color:#d73a49">const</span><span style="color:#24292e"> token = gmail_auth[</span><span style="color:#032f62">&#x27;token&#x27;</span><span style="color:#24292e">]</span></div></div>
<div style="position:absolute;left:2488px;top:134px;width:12px;height:116px;background:#cbcbcb"></div>
<div style="position:absolute;left:1284px;top:492px;width:1116px;height:13px;background:#cbcbcb"></div>
<div style="position:absolute;left:1284px;top:505px;width:1216px;height:1px;background:#d4d4d4"></div>
<div style="position:absolute;left:1284px;top:548px;width:1216px;height:1px;background:#e5e7eb"></div>
<div style="position:absolute;left:1284px;top:545px;width:141px;height:3px;background:#434c5e"></div>
<div style="position:absolute;left:1306.5px;top:516.34px;font-family:'Liberation Sans',sans-serif;font-size:19.6px;line-height:1;font-weight:700;font-style:normal;color:#1f2937;white-space:pre;">Step Input</div>
<div style="position:absolute;left:1448.5px;top:516.17px;font-family:'Liberation Sans',sans-serif;font-size:19.8px;line-height:1;font-weight:700;font-style:normal;color:#4b5563;white-space:pre;">Test this step</div>
<div style="position:absolute;left:1620px;top:516.60px;font-family:'Liberation Sans',sans-serif;font-size:19.3px;line-height:1;font-weight:700;font-style:normal;color:#4b5563;white-space:pre;">Advanced</div>
<div style="position:absolute;left:1306.5px;top:581.20px;font-size:22px;line-height:1;white-space:pre"><b style="font-weight:700;color:#111827">gmail_auth</b><span style="display:inline-block;width:12.5px;color:#dc2626;font-weight:400;font-size:25px;line-height:0;position:relative;top:1px">*</span> <i style="font-size:20.8px;color:#3730a3;margin-left:0.5px">(resource-gmail)</i></div>
<div style="position:absolute;left:1683px;top:571px;width:162.5px;height:42px;border:1px solid #e5e7eb;border-radius:8px;background:#fff"></div>
<div style="position:absolute;left:1683px;top:571px;width:81.5px;height:42px;background:#4c566a;border-radius:8px 0 0 8px"></div>
<div style="position:absolute;left:1700.5px;top:583.26px;font-family:'Liberation Sans',sans-serif;font-size:17.1px;line-height:1;font-weight:700;font-style:normal;color:#ffffff;white-space:pre;">Static</div>
<svg style="position:absolute;left:0px;top:0px;overflow:visible;pointer-events:none" width="2500" height="1370" viewBox="0 0 2500 1370"><g fill="none" stroke="#1f2937" stroke-width="1.500" stroke-linecap="round" stroke-linejoin="round"><path d="M1784.7 588.5l-3.200 3.300 3.200 3.300M1793.7 588.5l3.200 3.300-3.200 3.300M1790.8 586.0l-3.200 11.800"/></g><circle cx="1817.7" cy="592.8" r="8.8" fill="#6b7280"/><text x="1817.7" y="598.0" text-anchor="middle" font-family="Liberation Serif" font-weight="700" font-size="14" fill="#fff">i</text></svg>
<div style="position:absolute;left:1869px;top:570.5px;width:121.5px;height:43.0px;background:#5e81ac;border-radius:8px"></div>
<div style="position:absolute;left:1885.5px;top:582.85px;font-family:'Liberation Sans',sans-serif;font-size:17px;line-height:1;font-weight:700;font-style:normal;color:#ffffff;white-space:pre;">Connect</div>
<svg style="position:absolute;left:1957px;top:585.0px;overflow:visible;" width="16" height="14" viewBox="0 0 16 14"><path d="M1.500 7h12.500M8.500 1.500L14 7l-5.500 5.500" fill="none" stroke="#fff" stroke-width="2.200" stroke-linecap="round" stroke-linejoin="round"/></svg>
<div style="position:absolute;left:1306.5px;top:619.5px;width:510.5px;height:47.0px;border:1px solid #d1d5db;border-radius:8px;background:#fff"></div>
<div style="position:absolute;left:1318.5px;top:631.95px;font-family:'Liberation Sans',sans-serif;font-size:21px;line-height:1;font-weight:400;font-style:normal;color:#111827;white-space:pre;">u/henri/pro-email</div>
<svg style="position:absolute;left:1782px;top:635px;overflow:visible;" width="16" height="16" viewBox="0 0 16 16"><path d="M2 2l12 12M14 2L2 14" stroke="#111" stroke-width="2.600" stroke-linecap="square"/></svg>
<div style="position:absolute;left:1823px;top:619.5px;width:53px;height:47.0px;border:1px solid #7d93b2;border-radius:8px;background:#fff"></div>
<div style="position:absolute;left:1882px;top:619.5px;width:50px;height:47.0px;border:1px solid #7d93b2;border-radius:8px;background:#fff"></div>
<div style="position:absolute;left:1937.5px;top:619.5px;width:53.0px;height:47.0px;border:1px solid #7d93b2;border-radius:8px;background:#fff"></div>
<svg style="position:absolute;left:1840px;top:634px;overflow:visible;" width="19" height="19" viewBox="0 0 19 19"><path d="M13.500 1.800a2 2 0 0 1 2.800 0l.9.9a2 2 0 0 1 0 2.800L6.500 16.200 1.200 17.800 2.800 12.500z" fill="#5e81ac"/><path d="M11.800 3.500l3.700 3.700" stroke="#fff" stroke-width="1"/></svg>
<svg style="position:absolute;left:1898px;top:635px;overflow:visible;" width="17" height="17" viewBox="0 0 17 17"><path d="M8.500 1v15M1 8.500h15" stroke="#5e81ac" stroke-width="2"/></svg>
<svg style="position:absolute;left:1955px;top:634px;overflow:visible;" width="18" height="18" viewBox="0 0 18 18"><path d="M15.500 9A6.500 6.500 0 1 1 13.500 4.300" fill="none" stroke="#5e81ac" stroke-width="2.200"/><path d="M16.500 1.500v6h-6z" fill="#5e81ac"/></svg>
<div style="position:absolute;left:1306.5px;top:710.50px;font-size:22px;line-height:1;white-space:pre"><b style="font-weight:700;color:#111827">to_email</b><span style="display:inline-block;width:12.5px;color:#dc2626;font-weight:400;font-size:25px;line-height:0;position:relative;top:1px">*</span> <i style="font-size:20.8px;color:#3730a3;margin-left:0.5px">(string)</i></div>
<div style="position:absolute;left:1676px;top:700.5px;width:169.5px;height:42.0px;border:1px solid #e5e7eb;border-radius:8px;background:#fff"></div>
<div style="position:absolute;left:1676px;top:700.5px;width:88.5px;height:42.0px;background:#4c566a;border-radius:8px 0 0 8px"></div>
<div style="position:absolute;left:1692.8px;top:711.83px;font-family:'Liberation Sans',sans-serif;font-size:17.5px;line-height:1;font-weight:700;font-style:normal;color:#ffffff;white-space:pre;">${}</div>
<svg style="position:absolute;left:0px;top:0px;overflow:visible;pointer-events:none" width="2500" height="1370" viewBox="0 0 2500 1370"><circle cx="1736" cy="722.3" r="8.8" fill="#6f7685"/><text x="1736" y="727.5" text-anchor="middle" font-family="Liberation Serif" font-weight="700" font-size="14" fill="#596170">i</text><g fill="none" stroke="#1f2937" stroke-width="1.500" stroke-linecap="round" stroke-linejoin="round"><path d="M1784.7 718.0l-3.200 3.300 3.200 3.300M1793.7 718.0l3.200 3.300-3.200 3.300M1790.8 715.5l-3.200 11.800"/></g><circle cx="1817.7" cy="722.3" r="8.8" fill="#6b7280"/><text x="1817.7" y="727.5" text-anchor="middle" font-family="Liberation Serif" font-weight="700" font-size="14" fill="#fff">i</text></svg>
<div style="position:absolute;left:1869px;top:700px;width:121.5px;height:43px;background:#5e81ac;border-radius:8px"></div>
<div style="position:absolute;left:1885.5px;top:712.35px;font-family:'Liberation Sans',sans-serif;font-size:17px;line-height:1;font-weight:700;font-style:normal;color:#ffffff;white-space:pre;">Connect</div>
<svg style="position:absolute;left:1957px;top:714.5px;overflow:visible;" width="16" height="14" viewBox="0 0 16 14"><path d="M1.500 7h12.500M8.500 1.500L14 7l-5.500 5.500" fill="none" stroke="#fff" stroke-width="2.200" stroke-linecap="round" stroke-linejoin="round"/></svg>
<div style="position:absolute;left:1306.5px;top:760px;width:684.0px;height:41.5px;border:1px solid #8b8f96;border-radius:6px;background:#fff"></div>
<div style="position:absolute;left:1310px;top:763px;width:19px;height:35.5px;background:#fafbfc"></div>
<div style="position:absolute;left:1329px;top:767.5px;width:654px;height:26.5px;border-top:1.500px solid #ececec;border-bottom:1.500px solid #ececec"></div>
<div style="position:absolute;left:1967.5px;top:768px;width:18.0px;height:25.5px;border:1px solid #e6e6e6;border-radius:0 4px 4px 0"></div>
<div style="position:absolute;left:1968px;top:768px;width:9.5px;height:25.5px;background:#acacac"></div>
<div style="position:absolute;left:1966px;top:767px;width:17px;height:2px;background:#222;border-radius:3px 3px 0 0"></div>
<div style="position:absolute;left:1328.5px;top:771.87px;font-family:'Liberation Mono',monospace;font-size:19.45px;line-height:1;font-weight:400;font-style:normal;color:#111111;white-space:pre;-webkit-text-stroke:0.3px #111">henri@windmill.dev</div>
<div style="position:absolute;left:1306.5px;top:845.70px;font-size:22px;line-height:1;white-space:pre"><b style="font-weight:700;color:#111827">subject</b><span style="display:inline-block;width:12.5px;color:#dc2626;font-weight:400;font-size:25px;line-height:0;position:relative;top:1px">*</span> <i style="font-size:20.8px;color:#3730a3;margin-left:0.5px">(string)</i></div>
<div style="position:absolute;left:1676px;top:836px;width:169.5px;height:41.60000000000002px;border:1px solid #e5e7eb;border-radius:8px;background:#fff"></div>
<div style="position:absolute;left:1676px;top:836px;width:88.5px;height:41.60000000000002px;background:#4c566a;border-radius:8px 0 0 8px"></div>
<div style="position:absolute;left:1692.8px;top:847.12px;font-family:'Liberation Sans',sans-serif;font-size:17.5px;line-height:1;font-weight:700;font-style:normal;color:#ffffff;white-space:pre;">${}</div>
<svg style="position:absolute;left:0px;top:0px;overflow:visible;pointer-events:none" width="2500" height="1370" viewBox="0 0 2500 1370"><circle cx="1736" cy="857.5999999999999" r="8.8" fill="#6f7685"/><text x="1736" y="862.8" text-anchor="middle" font-family="Liberation Serif" font-weight="700" font-size="14" fill="#596170">i</text><g fill="none" stroke="#1f2937" stroke-width="1.500" stroke-linecap="round" stroke-linejoin="round"><path d="M1784.7 853.3l-3.200 3.300 3.200 3.300M1793.7 853.3l3.200 3.300-3.200 3.300M1790.8 850.8l-3.200 11.800"/></g><circle cx="1817.7" cy="857.5999999999999" r="8.8" fill="#6b7280"/><text x="1817.7" y="862.8" text-anchor="middle" font-family="Liberation Serif" font-weight="700" font-size="14" fill="#fff">i</text></svg>
<div style="position:absolute;left:1869px;top:835.5px;width:121.5px;height:42.5px;background:#5e81ac;border-radius:8px"></div>
<div style="position:absolute;left:1885.5px;top:847.60px;font-family:'Liberation Sans',sans-serif;font-size:17px;line-height:1;font-weight:700;font-style:normal;color:#ffffff;white-space:pre;">Connect</div>
<svg style="position:absolute;left:1957px;top:849.75px;overflow:visible;" width="16" height="14" viewBox="0 0 16 14"><path d="M1.500 7h12.500M8.500 1.500L14 7l-5.500 5.500" fill="none" stroke="#fff" stroke-width="2.200" stroke-linecap="round" stroke-linejoin="round"/></svg>
<div style="position:absolute;left:1306.5px;top:895.5px;width:684.0px;height:42.0px;border:1px solid #8b8f96;border-radius:6px;background:#fff"></div>
<div style="position:absolute;left:1310px;top:898.5px;width:19px;height:36.0px;background:#fafbfc"></div>
<div style="position:absolute;left:1329px;top:903.0px;width:654px;height:27.0px;border-top:1.500px solid #ececec;border-bottom:1.500px solid #ececec"></div>
<div style="position:absolute;left:1967.5px;top:903.5px;width:18.0px;height:26.0px;border:1px solid #e6e6e6;border-radius:0 4px 4px 0"></div>
<div style="position:absolute;left:1968px;top:903.5px;width:9.5px;height:26.0px;background:#acacac"></div>
<div style="position:absolute;left:1966px;top:902.5px;width:17px;height:2.0px;background:#222;border-radius:3px 3px 0 0"></div>
<div style="position:absolute;left:1328.5px;top:907.62px;font-family:'Liberation Mono',monospace;font-size:19.45px;line-height:1;font-weight:400;font-style:normal;color:#111111;white-space:pre;-webkit-text-stroke:0.3px #111">Earthquake report is ready!</div>
<div style="position:absolute;left:1306.5px;top:981.90px;font-size:22px;line-height:1;white-space:pre"><b style="font-weight:700;color:#111827">message</b><span style="display:inline-block;width:12.5px;color:#dc2626;font-weight:400;font-size:25px;line-height:0;position:relative;top:1px">*</span> <i style="font-size:20.8px;color:#3730a3;margin-left:0.5px">(string)</i></div>
<div style="position:absolute;left:1676px;top:970.8px;width:169.5px;height:42.700000000000045px;border:1px solid #e5e7eb;border-radius:8px;background:#fff"></div>
<div style="position:absolute;left:1764.5px;top:970.8px;width:81.0px;height:42.700000000000045px;background:#4c566a;border-radius:0 8px 8px 0"></div>
<div style="position:absolute;left:1692.8px;top:982.48px;font-family:'Liberation Sans',sans-serif;font-size:17.5px;line-height:1;font-weight:700;font-style:normal;color:#374151;white-space:pre;">${}</div>
<svg style="position:absolute;left:0px;top:0px;overflow:visible;pointer-events:none" width="2500" height="1370" viewBox="0 0 2500 1370"><circle cx="1736" cy="992.9499999999999" r="8.8" fill="#6b7280"/><text x="1736" y="998.15" text-anchor="middle" font-family="Liberation Serif" font-weight="700" font-size="14" fill="#fff">i</text><g fill="none" stroke="#ffffff" stroke-width="1.500" stroke-linecap="round" stroke-linejoin="round"><path d="M1784.7 988.65l-3.200 3.300 3.200 3.300M1793.7 988.65l3.200 3.300-3.200 3.300M1790.8 986.15l-3.200 11.800"/></g><circle cx="1817.7" cy="992.9499999999999" r="8.8" fill="#6f7685"/><text x="1817.7" y="998.15" text-anchor="middle" font-family="Liberation Serif" font-weight="700" font-size="14" fill="#596170">i</text></svg>
<div style="position:absolute;left:1869px;top:970.8px;width:121.5px;height:42.700000000000045px;background:#5e81ac;border-radius:8px"></div>
<div style="position:absolute;left:1885.5px;top:983.00px;font-family:'Liberation Sans',sans-serif;font-size:17px;line-height:1;font-weight:700;font-style:normal;color:#ffffff;white-space:pre;">Connect</div>
<svg style="position:absolute;left:1957px;top:985.15px;overflow:visible;" width="16" height="14" viewBox="0 0 16 14"><path d="M1.500 7h12.500M8.500 1.500L14 7l-5.500 5.500" fill="none" stroke="#fff" stroke-width="2.200" stroke-linecap="round" stroke-linejoin="round"/></svg>
<div style="position:absolute;left:1306.5px;top:1030px;width:683.5px;height:43.5px;border:1px solid #e5e7eb;border-radius:5px;background:#fff"></div>
<div style="position:absolute;left:1307.5px;top:1031px;width:39.5px;height:41.5px;background:#f7f8fa;border-radius:4px 0 0 4px"></div>
<div style="position:absolute;left:1347px;top:1032px;width:623px;height:25px;border-top:1.500px solid #eeeeee;border-bottom:1.500px solid #eeeeee"></div>
<div style="position:absolute;left:1970px;top:1031px;width:1px;height:42px;background:#e5e5e5"></div>
<div style="position:absolute;left:1970px;top:1030.5px;width:19.5px;height:2.5px;background:#333"></div>
<div style="position:absolute;left:1317.5px;top:1036.11px;font-family:'Liberation Mono',monospace;font-size:16.7px;line-height:1;font-weight:400;font-style:normal;color:#1e3a8a;white-space:pre;">1</div>
<div style="position:absolute;left:1346.5px;top:1036.11px;width:641px;overflow:hidden;font-family:'Liberation Mono',monospace;font-size:16.7px;line-height:1;white-space:pre;-webkit-text-stroke:0.25px currentColor"><span style="color:#a31515">'Feel free to check out the latest report :) \n\n'</span><span style="color:#111"> + results.a.text</span></div>
<div style="position:absolute;left:1900.8px;top:1075.48px;font-family:'Liberation Sans',sans-serif;font-size:18.5px;line-height:1;font-weight:400;font-style:normal;color:#1f2937;white-space:pre;text-decoration:underline;text-underline-offset:2px;text-decoration-thickness:1.300px;text-decoration-skip-ink:none">Help </div>
<svg style="position:absolute;left:1954px;top:1082px;overflow:visible;" width="14" height="10" viewBox="0 0 14 10"><path d="M1.500 2l5.500 5.500L12.500 2" fill="none" stroke="#1f2937" stroke-width="2" stroke-linecap="round" stroke-linejoin="round"/></svg>
<div style="position:absolute;left:1306.5px;top:1140.10px;font-size:22px;line-height:1;white-space:pre"><b style="font-weight:700;color:#111827">user_id</b> <i style="font-size:20.8px;color:#3730a3;margin-left:1px">(string)</i></div>
<div style="position:absolute;left:1676px;top:1130px;width:169.5px;height:42.200000000000045px;border:1px solid #e5e7eb;border-radius:8px;background:#fff"></div>
<div style="position:absolute;left:1676px;top:1130px;width:88.5px;height:42.200000000000045px;background:#4c566a;border-radius:8px 0 0 8px"></div>
<div style="position:absolute;left:1692.8px;top:1141.42px;font-family:'Liberation Sans',sans-serif;font-size:17.5px;line-height:1;font-weight:700;font-style:normal;color:#ffffff;white-space:pre;">${}</div>
<svg style="position:absolute;left:0px;top:0px;overflow:visible;pointer-events:none" width="2500" height="1370" viewBox="0 0 2500 1370"><circle cx="1736" cy="1151.8999999999999" r="8.8" fill="#6f7685"/><text x="1736" y="1157.1" text-anchor="middle" font-family="Liberation Serif" font-weight="700" font-size="14" fill="#596170">i</text><g fill="none" stroke="#1f2937" stroke-width="1.500" stroke-linecap="round" stroke-linejoin="round"><path d="M1784.7 1147.6l-3.200 3.300 3.200 3.300M1793.7 1147.6l3.200 3.300-3.200 3.300M1790.8 1145.1l-3.200 11.800"/></g><circle cx="1817.7" cy="1151.8999999999999" r="8.8" fill="#6b7280"/><text x="1817.7" y="1157.1" text-anchor="middle" font-family="Liberation Serif" font-weight="700" font-size="14" fill="#fff">i</text></svg>
<div style="position:absolute;left:1869px;top:1130px;width:121.5px;height:42.200000000000045px;background:#5e81ac;border-radius:8px"></div>
<div style="position:absolute;left:1885.5px;top:1141.95px;font-family:'Liberation Sans',sans-serif;font-size:17px;line-height:1;font-weight:700;font-style:normal;color:#ffffff;white-space:pre;">Connect</div>
<svg style="position:absolute;left:1957px;top:1144.1px;overflow:visible;" width="16" height="14" viewBox="0 0 16 14"><path d="M1.500 7h12.500M8.500 1.500L14 7l-5.500 5.500" fill="none" stroke="#fff" stroke-width="2.200" stroke-linecap="round" stroke-linejoin="round"/></svg>
<div style="position:absolute;left:1306.5px;top:1189.3px;width:684.0px;height:42.0px;border:1px solid #8b8f96;border-radius:6px;background:#fff"></div>
<div style="position:absolute;left:1310px;top:1192.3px;width:19px;height:36.0px;background:#fafbfc"></div>
<div style="position:absolute;left:1329px;top:1196.8px;width:654px;height:27.0px;border-top:1.500px solid #ececec;border-bottom:1.500px solid #ececec"></div>
<div style="position:absolute;left:1967.5px;top:1197.3px;width:18.0px;height:26.0px;border:1px solid #e6e6e6;border-radius:0 4px 4px 0"></div>
<div style="position:absolute;left:1966px;top:1196.3px;width:17px;height:2.0px;background:#222;border-radius:3px 3px 0 0"></div>
<div style="position:absolute;left:1328.5px;top:1201.42px;font-family:'Liberation Mono',monospace;font-size:19.45px;line-height:1;font-weight:400;font-style:normal;color:#111111;white-space:pre;-webkit-text-stroke:0.3px #111">me</div>
<div style="position:absolute;left:2013px;top:549px;width:1px;height:821px;background:#e5e7eb"></div>
<div style="position:absolute;left:2014px;top:654.5px;width:486px;height:715.5px;background:#f3f4f6"></div>
<div style="position:absolute;left:2025.5px;top:559.5px;width:224.0px;height:33.0px;background:#dbeafe;border-radius:6px"></div>
<svg style="position:absolute;left:2040px;top:569px;overflow:visible;" width="17" height="15" viewBox="0 0 17 15"><path d="M15.500 7.500H2M8 1.500L2 7.500l6 6" fill="none" stroke="#1e40af" stroke-width="2" stroke-linecap="round" stroke-linejoin="round"/></svg>
<div style="position:absolute;left:2064px;top:565.90px;font-family:'Liberation Sans',sans-serif;font-size:20.7px;line-height:1;font-weight:400;font-style:normal;color:#1e40af;white-space:pre;-webkit-text-stroke:0.35px #1e40af">Select a step input</div>
<div style="position:absolute;left:2025.5px;top:603.5px;width:463.0px;height:40.5px;border:1px solid #d1d5db;border-radius:8px;background:#f9fafb"></div>
<div style="position:absolute;left:2038px;top:613.80px;font-family:'Liberation Sans',sans-serif;font-size:20px;line-height:1;font-weight:400;font-style:normal;color:#6b7280;white-space:pre;">Search prop...</div>
<div style="position:absolute;left:2025.5px;top:659.34px;font-family:'Liberation Sans',sans-serif;font-size:19.6px;line-height:1;font-weight:700;font-style:normal;color:#111827;white-space:pre;">Flow Input</div>
<div style="position:absolute;left:2042.5px;top:693.70px;font-family:'Liberation Sans',sans-serif;font-size:18px;line-height:1;font-weight:400;font-style:normal;color:#111827;white-space:pre;">URL</div>
<div style="position:absolute;left:2090.5px;top:693.70px;font-family:'Liberation Sans',sans-serif;font-size:18px;line-height:1;font-weight:700;font-style:normal;color:#111827;white-space:pre;">:</div>
<div style="position:absolute;left:2106.3px;top:695.90px;font-family:'Liberation Sans',sans-serif;font-size:16px;line-height:1;font-weight:700;font-style:normal;color:#16a34a;white-space:pre;">&quot;https://earthquake.usgs.gov/&quot;</div>
<div style="position:absolute;left:2025.3px;top:737.27px;font-family:'Liberation Sans',sans-serif;font-size:19.45px;line-height:1;font-weight:700;font-style:normal;color:#111827;white-space:pre;">Previous Result</div>
<div style="position:absolute;left:2036px;top:769.5px;width:39.5px;height:28.5px;background:#e0e7ff;border:1px solid #6f86e6;border-radius:6px"></div>
<div style="position:absolute;left:1555.6999999999998px;width:1000px;text-align:center;top:775.20px;font-family:'Liberation Sans',sans-serif;font-size:18px;line-height:1;font-weight:700;font-style:normal;color:#3730a3;white-space:pre;">a</div>
<div style="position:absolute;left:2081.5px;top:773.70px;font-family:'Liberation Sans',sans-serif;font-size:18px;line-height:1;font-weight:700;font-style:normal;color:#111827;white-space:pre;">:</div>
<div style="position:absolute;left:2091.5px;top:769.5px;width:21.0px;height:24.0px;border:1px solid #d1d5db;border-radius:5px;background:#f9fafb"></div>
<div style="position:absolute;left:2098px;top:781px;width:8px;height:2px;background:#374151"></div>
<div style="position:absolute;left:2036px;top:800px;width:464px;height:247.5px;background:#f2f3f5"></div>
<div style="position:absolute;left:2054.3px;top:807.00px;font-family:'Liberation Sans',sans-serif;font-size:20px;line-height:1;font-weight:400;font-style:normal;color:#111827;white-space:pre;letter-spacing:0.3px">ok</div>
<div style="position:absolute;left:2088px;top:808.70px;font-family:'Liberation Sans',sans-serif;font-size:18px;line-height:1;font-weight:700;font-style:normal;color:#111827;white-space:pre;">:</div>
<div style="position:absolute;left:2103.4px;top:810.99px;font-family:'Liberation Sans',sans-serif;font-size:15.9px;line-height:1;font-weight:700;font-style:normal;color:#2563eb;white-space:pre;">true</div>
<div style="position:absolute;left:2054px;top:843.00px;font-family:'Liberation Sans',sans-serif;font-size:20px;line-height:1;font-weight:400;font-style:normal;color:#111827;white-space:pre;letter-spacing:0.3px">text</div>
<div style="position:absolute;left:2100.5px;top:844.70px;font-family:'Liberation Sans',sans-serif;font-size:18px;line-height:1;font-weight:700;font-style:normal;color:#111827;white-space:pre;">:</div>
<div style="position:absolute;left:1769px;width:1000px;text-align:center;top:874.49px;font-family:'Liberation Sans',sans-serif;font-size:15.9px;line-height:1;font-weight:700;font-style:normal;color:#16a34a;white-space:pre;">&quot;&lt;!DOCTYPE html&gt; &lt;html lang=&quot;en&quot;&gt; &lt;head&gt;</div>
<div style="position:absolute;left:1769px;width:1000px;text-align:center;top:903.32px;font-family:'Liberation Sans',sans-serif;font-size:16.1px;line-height:1;font-weight:700;font-style:normal;color:#16a34a;white-space:pre;">&lt;title&gt;USGS Earthquake Hazards Program&lt;/title&gt; &lt;meta</div>
<div style="position:absolute;left:1769px;width:1000px;text-align:center;top:933.23px;font-family:'Liberation Sans',sans-serif;font-size:16.2px;line-height:1;font-weight:700;font-style:normal;color:#16a34a;white-space:pre;">charset=&quot;utf-8&quot;/&gt; &lt;meta name=&quot;viewport&quot;</div>
<div style="position:absolute;left:1769px;width:1000px;text-align:center;top:962.87px;font-family:'Liberation Sans',sans-serif;font-size:16.15px;line-height:1;font-weight:700;font-style:normal;color:#16a34a;white-space:pre;">content=&quot;width=device-width, initial-scale=1&quot;/&gt; &lt;link</div>
<div style="position:absolute;left:1769px;width:1000px;text-align:center;top:992.00px;font-family:'Liberation Sans',sans-serif;font-size:16px;line-height:1;font-weight:700;font-style:normal;color:#16a34a;white-space:pre;">rel=&quot;...&quot;</div>
<div style="position:absolute;left:2054px;top:1023.00px;font-family:'Liberation Sans',sans-serif;font-size:20px;line-height:1;font-weight:400;font-style:normal;color:#111827;white-space:pre;letter-spacing:0.3px">status</div>
<div style="position:absolute;left:2122.5px;top:1024.70px;font-family:'Liberation Sans',sans-serif;font-size:18px;line-height:1;font-weight:700;font-style:normal;color:#111827;white-space:pre;">:</div>
<div style="position:absolute;left:2138px;top:1026.31px;font-family:'Liberation Sans',sans-serif;font-size:16.7px;line-height:1;font-weight:700;font-style:normal;color:#ea580c;white-space:pre;">200</div>
<div style="position:absolute;left:2025.8px;top:1068.42px;font-family:'Liberation Sans',sans-serif;font-size:19.5px;line-height:1;font-weight:700;font-style:normal;color:#111827;white-space:pre;">All Results</div>
<div style="position:absolute;left:2025px;top:1096px;width:48px;height:28px;border:1px solid #5b84d6;border-radius:7px;background:#f7f8fb"></div>
<div style="position:absolute;left:1549px;width:1000px;text-align:center;top:1099.35px;font-family:'Liberation Sans',sans-serif;font-size:21px;line-height:1;font-weight:400;font-style:normal;color:#111827;white-space:pre;">{...}</div>
<div style="position:absolute;left:2079.5px;top:1104.03px;font-family:'Liberation Sans',sans-serif;font-size:16.2px;line-height:1;font-weight:400;font-style:normal;color:#6b7280;white-space:pre;">1 key</div>
<div style="position:absolute;left:2025.8px;top:1145.52px;font-family:'Liberation Sans',sans-serif;font-size:19.5px;line-height:1;font-weight:700;font-style:normal;color:#111827;white-space:pre;">Variables</div>
<div style="position:absolute;left:2025px;top:1172.5px;width:48px;height:33.799999999999955px;border:1px solid #5b84d6;border-radius:7px;background:#f7f8fb"></div>
<div style="position:absolute;left:1549px;width:1000px;text-align:center;top:1178.75px;font-family:'Liberation Sans',sans-serif;font-size:21px;line-height:1;font-weight:400;font-style:normal;color:#111827;white-space:pre;">{...}</div>
<div style="position:absolute;left:2025.8px;top:1224.72px;font-family:'Liberation Sans',sans-serif;font-size:19.5px;line-height:1;font-weight:700;font-style:normal;color:#111827;white-space:pre;">Resources</div>
<div style="position:absolute;left:2025px;top:1251.3px;width:48px;height:34.700000000000045px;border:1px solid #5b84d6;border-radius:7px;background:#f7f8fb"></div>
<div style="position:absolute;left:1549px;width:1000px;text-align:center;top:1258.00px;font-family:'Liberation Sans',sans-serif;font-size:21px;line-height:1;font-weight:400;font-style:normal;color:#111827;white-space:pre;">{...}</div>
</body></html>
